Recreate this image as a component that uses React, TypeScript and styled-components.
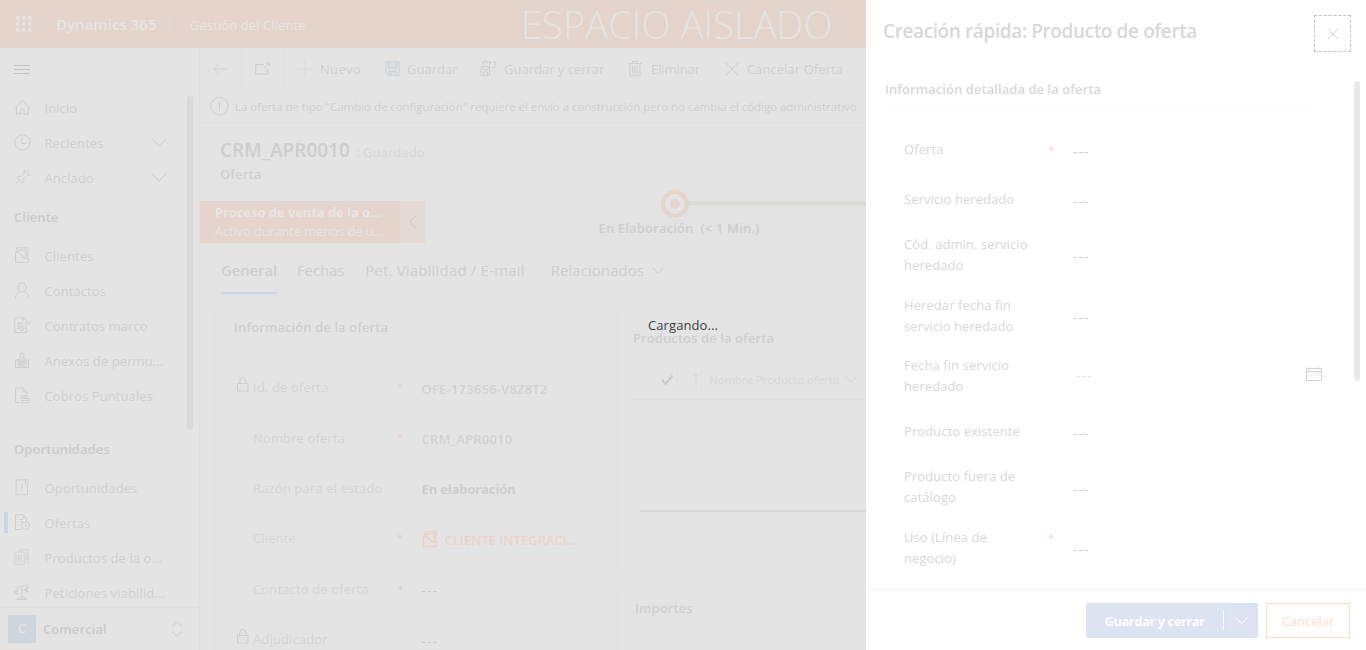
import React from 'react';
import styled, { createGlobalStyle, css } from 'styled-components';

const c = {
  page: '#e4e4e4',
  line: '#dfdfdf',
  faint: '#e1e1e1',
  text: '#cfcfcf',
  strong: '#cacaca',
  icon: '#cecece',
  brand: '#e5d4cb',
  onBrand: '#e7e6e5',
  blue: '#cbd4e5',
};

const Global = createGlobalStyle`
  * { box-sizing: border-box; }
  body { margin: 0; background: #fff; overflow: hidden; }
  #root { font-family: 'Open Sans', 'Noto Sans', sans-serif; font-size: 13px; letter-spacing: 0.09px; white-space: nowrap; color: ${c.text}; }
`;

const Shell = styled.div`
  display: grid;
  grid-template-columns: 866px 500px;
  width: 1366px;
  height: 650px;
  overflow: hidden;
`;
const Workspace = styled.div`
  display: grid;
  grid-template-rows: 48px 602px;
  background: ${c.page};
  overflow: hidden;
`;

/* Top bar */
const TopBar = styled.header`
  display: flex;
  align-items: center;
  background: ${c.brand};
  color: ${c.onBrand};
  padding-left: 16px;
`;
const Brand = styled.span`
  width: 118px;
  margin-left: 24px;
  font-size: 15px;
  font-weight: 600;
  letter-spacing: 0.03px;
`;
const Area = styled.span`
  width: 347px;
  height: 20px;
  line-height: 20px;
  padding-left: 15px;
  border-left: 1px solid #e2cfc5;
  margin-top: 2px;
`;
const Environment = styled.span`
  font-size: 38px;
  font-weight: 300;
  line-height: 46px;
  letter-spacing: 0.1px;
  color: #e6e4e3;
`;

/* Sidebar */
const Columns = styled.div`
  display: grid;
  grid-template-columns: 200px 666px;
`;
const Sidebar = styled.nav`
  display: flex;
  flex-direction: column;
  height: 602px;
  border-right: 1px solid ${c.line};
`;
const MenuToggle = styled.div`
  display: flex;
  align-items: center;
  height: 42px;
  padding-left: 14px;
  flex: none;
`;
const NavScroll = styled.div`
  display: grid;
  grid-template-columns: 181px 18px;
  height: 517px;
  overflow: hidden;
`;
const Thumb = styled.div<{ $h: number; $color: string }>`
  width: 6px;
  height: ${p => p.$h}px;
  border-radius: 3px;
  background: ${p => p.$color};
`;
const NavTrack = styled.div`
  padding: 6px 0 0 6px;
`;
const NavItem = styled.div<{ $active?: boolean }>`
  display: grid;
  grid-template-columns: 4px 26px 117px 16px;
  align-items: center;
  height: 35px;
  padding-left: 4px;
  ${p => p.$active && css`background: #e5e5e5;`}
`;
const Marker = styled.i<{ $on?: boolean }>`
  width: 4px;
  height: 21px;
  background: ${p => (p.$on ? c.blue : 'transparent')};
`;
const NavIcon = styled.span`
  display: flex;
  padding-left: 6px;
`;
const NavLabel = styled.span`
  padding-left: 10.5px;
`;
const NavHeading = styled.div<{ $gap?: number }>`
  height: 43px;
  line-height: 44px;
  margin-top: ${p => p.$gap || 0}px;
  padding-left: 14px;
  font-weight: 600;
  color: ${c.strong};
`;
const AreaSwitch = styled.div`
  display: flex;
  align-items: center;
  height: 43px;
  padding: 0 16px 0 8px;
  border-top: 1px solid ${c.line};
  font-weight: 600;
  color: ${c.strong};
  svg { margin-left: auto; }
`;
const AreaBadge = styled.span`
  width: 28px;
  height: 28px;
  margin-right: 7px;
  border-radius: 2px;
  background: #ced6dc;
  color: #e4e4e4;
  line-height: 26px;
  text-align: center;
`;

/* Main area */
const Main = styled.main`
  display: flex;
  flex-direction: column;
  height: 602px;
  overflow: hidden;
`;
const CommandBar = styled.div`
  display: flex;
  height: 42px;
  flex: none;
  border-bottom: 1px solid ${c.line};
`;
const IconCell = styled.div<{ $w: number }>`
  display: flex;
  align-items: center;
  justify-content: center;
  width: ${p => p.$w}px;
  border-right: 1px solid ${c.line};
`;
const Command = styled.div<{ $w: number; $gap: number; $ls?: number }>`
  display: flex;
  align-items: center;
  gap: ${p => p.$gap}px;
  width: ${p => p.$w}px;
  letter-spacing: ${p => p.$ls || 0}px;
`;
const Commands = styled.div`
  display: flex;
  padding-left: 12px;
`;
const Notice = styled.div`
  display: flex;
  align-items: center;
  gap: 5px;
  height: 33px;
  flex: none;
  padding-left: 9px;
  border-bottom: 1px solid ${c.line};
  font-size: 11.5px;
  letter-spacing: -0.04px;
`;
const RecordHead = styled.div`
  height: 78px;
  flex: none;
  padding: 13px 0 0 20px;
`;
const RecordTitle = styled.div`
  display: flex;
  align-items: center;
  gap: 5px;
  height: 28px;
`;
const RecordName = styled.span`
  font-size: 19px;
  font-weight: 600;
  letter-spacing: 0.04px;
  color: #cdcdcd;
`;
const SaveState = styled.span`
  padding: 3px 0 0 1px;
  color: #d6d6d6;
`;
const EntityName = styled.div`
  padding-top: 1px;
  line-height: 18px;
  font-weight: 600;
  color: #cfcfcf;
`;
const ProcessBar = styled.div`
  display: flex;
  height: 42px;
  flex: none;
  background: #e3e3e3;
  border-top: 1px solid ${c.faint};
`;
const ProcessName = styled.div`
  width: 200px;
  height: 42px;
  margin-top: -1px;
  padding: 1px 0 0 15px;
  background: ${c.brand};
  color: ${c.onBrand};
  line-height: 19px;
  letter-spacing: -0.19px;
`;
const ProcessTitle = styled.div`
  font-weight: 700;
  line-height: 20px;
  letter-spacing: -0.07px;
`;
const ProcessCollapse = styled.div`
  display: flex;
  align-items: center;
  justify-content: center;
  width: 25px;
  height: 42px;
  margin-top: -1px;
  background: #e3dad6;
`;
const Stage = styled.div`
  flex: 1;
  display: flex;
  flex-direction: column;
  padding-left: 173px;
  margin-top: -13px;
`;
const StageTrack = styled.div`
  display: flex;
  align-items: center;
  height: 30px;
  padding-left: 63px;
`;
const StageRing = styled.i`
  display: grid;
  place-items: center;
  width: 28px;
  height: 28px;
  border: 4px solid ${c.brand};
  border-radius: 50%;
  background: ${c.page};
  &::after {
    content: '';
    width: 10px;
    height: 10px;
    border-radius: 50%;
    background: ${c.brand};
  }
`;
const StageLine = styled.i`
  flex: 1;
  height: 4px;
  margin-top: -2px;
  background: #d9d9d6;
`;
const StageName = styled.span`
  padding-left: 0.5px;
  font-weight: 600;
  line-height: 18px;
  letter-spacing: 0.16px;
  white-space: pre;
  color: #cdcdcd;
`;
const Tabs = styled.div`
  display: flex;
  height: 52px;
  flex: none;
  padding-left: 21px;
  border-bottom: 1px solid ${c.line};
  font-size: 15px;
`;
const Tab = styled.span<{ $gap?: number; $ls: number; $active?: boolean }>`
  display: flex;
  align-items: center;
  gap: 8px;
  height: 51px;
  padding-top: 5px;
  margin-right: ${p => p.$gap || 0}px;
  letter-spacing: ${p => p.$ls}px;
  color: #cecece;
  border-bottom: 2px solid ${p => (p.$active ? c.blue : 'transparent')};
  font-weight: ${p => (p.$active ? 600 : 400)};
`;
const Form = styled.div`
  display: grid;
  grid-template-columns: 388px 250px;
  gap: 14px;
  flex: 1;
  padding: 13px 0 0 15px;
`;
const Stack = styled.div`
  display: flex;
  flex-direction: column;
  gap: 16px;
`;
const Card = styled.section<{ $h: number; $pad: number }>`
  height: ${p => p.$h}px;
  padding: 0 0 0 ${p => p.$pad}px;
  border: 1px solid ${c.faint};
  border-right-color: ${p => (p.$pad > 17 ? c.faint : 'transparent')};
  border-radius: 3px;
`;
const CardTitle = styled.h2<{ $h: number; $top: number }>`
  margin: 0 17px 0 0;
  height: ${p => p.$h}px;
  padding-top: ${p => p.$top}px;
  border-bottom: 1px solid ${c.faint};
  font-size: 13px;
  font-weight: 600;
  line-height: 20px;
  color: #cfcfcf;
`;
const Fields = styled.div`
  padding: 16px 0 0 3px;
`;
const Field = styled.div`
  display: grid;
  grid-template-columns: 16px 144px 24px 160px;
  height: 50.4px;
  align-items: center;
`;
const FieldLabel = styled.span`
  letter-spacing: 0.14px;
  color: #d4d4d4;
`;
const Required = styled.span<{ $color?: string }>`
  font-size: 11px;
  line-height: 14px;
  padding-bottom: 1px;
  color: ${p => p.$color || '#e8cdca'};
`;
const FieldValue = styled.span<{ $kind?: string }>`
  display: flex;
  align-items: center;
  gap: 6px;
  padding: 3px 0 0 0.5px;
  font-weight: ${p => (p.$kind === 'bold' ? 700 : p.$kind === 'empty' ? 400 : 600)};
  letter-spacing: ${p => (p.$kind === 'bold' ? -0.14 : p.$kind === 'empty' ? 1.4 : p.$kind === 'link' ? 0.02 : 0.2)}px;
  color: ${p => (p.$kind === 'link' ? '#e8d4cc' : p.$kind === 'bold' ? '#cdcdcd' : p.$kind === 'empty' ? '#cbcbcb' : '#d2d2d2')};
`;
const GridHead = styled.div`
  display: flex;
  align-items: center;
  height: 40px;
  border-bottom: 1px solid ${c.line};
  padding-left: 28px;
  font-size: 11.5px;
  letter-spacing: -0.09px;
  color: #d8d8d8;
`;
const Divider = styled.i<{ $l: number; $r: number }>`
  width: 1px;
  height: 20px;
  margin: 0 ${p => p.$r}px 0 ${p => p.$l}px;
  background: ${c.line};
`;
const HeadText = styled.span`
  margin-right: 6px;
`;
const GridBody = styled.div`
  height: 112px;
  margin-left: 7px;
  border-bottom: 2px solid #d9d9d9;
`;
const GridFoot = styled.div`
  height: 39px;
  margin-top: 7px;
  background: #e3e3e3;
`;

/* Loading message over the dimmed page */
const Loading = styled.div`
  position: absolute;
  left: 648px;
  top: 316px;
  line-height: 18px;
  color: #3c3c3c;
`;

/* Quick create panel */
const Panel = styled.aside`
  display: grid;
  grid-template-rows: 69px 520px 61px;
  background: #fff;
  color: #d8d8d8;
`;
const PanelHead = styled.header`
  display: flex;
  justify-content: space-between;
  padding: 15px 15px 0 17px;
`;
const PanelTitle = styled.h1`
  margin: 0;
  font-size: 19px;
  font-weight: 600;
  line-height: 33px;
  letter-spacing: -0.39px;
  color: #d8d8d8;
`;
const CloseButton = styled.button`
  display: grid;
  place-items: center;
  width: 37px;
  height: 37px;
  padding: 0;
  border: 1px dashed #c2c2c2;
  background: none;
`;
const PanelBody = styled.div`
  display: grid;
  grid-template-columns: 449px 39px 12px;
  overflow: hidden;
`;
const PanelForm = styled.div`
  padding-left: 17px;
`;
const PanelSection = styled.h2`
  margin: 0;
  height: 39px;
  padding: 10px 0 0 2px;
  border-bottom: 1px solid #fafafa;
  font-size: 13px;
  font-weight: 600;
  line-height: 20px;
  letter-spacing: 0.06px;
  color: #d8d8d8;
`;
const PanelTrack = styled.div`
  grid-column: 3;
  padding-top: 12px;
`;
const PanelFields = styled.div`
  display: flex;
  flex-direction: column;
  padding: 30.5px 0 0 21px;
`;
const PanelField = styled.div<{ $h: number }>`
  display: grid;
  grid-template-columns: 144px 25px 233px 20px;
  height: ${p => p.$h}px;
  line-height: 21px;
  align-items: start;
`;
const PanelLabel = styled.span`
  white-space: pre-line;
  letter-spacing: 0.08px;
`;
const PanelRequired = styled.span`
  font-size: 11px;
  color: #ffcfc8;
`;
const PanelValue = styled.span<{ $top: number; $indent?: boolean }>`
  padding: ${p => p.$top}px 0 0 ${p => (p.$indent ? 3 : 0)}px;
  letter-spacing: 1.5px;
  color: ${p => (p.$indent ? '#dcdcdc' : '#c8c8c8')};
`;
const PanelIcon = styled.span`
  padding-top: 11px;
  line-height: 0;
`;
const PanelFoot = styled.footer`
  display: flex;
  padding: 13px 16px 0 0;
  justify-content: flex-end;
  border-top: 1px solid #f5f5f5;
  margin-left: 1px;
`;
const SaveButton = styled.button`
  width: 138px;
  height: 35px;
  padding: 0 2px 0 0;
  border: 1px solid #dce4f1;
  border-right: 0;
  border-radius: 2px 0 0 2px;
  background: linear-gradient(#fff, #fff) right 0 center / 1px 19px no-repeat #dce4f1;
  color: #fdfdfe;
  font: 700 13px 'Open Sans', sans-serif;
  letter-spacing: -0.49px;
`;
const SplitButton = styled.button`
  display: grid;
  place-items: center;
  width: 34px;
  height: 35px;
  margin-right: 8px;
  padding: 0;
  border: 1px solid #cfe4f4;
  border-radius: 0 2px 2px 0;
  background: #dce4f1;
`;
const CancelButton = styled.button`
  width: 84px;
  height: 35px;
  padding: 0;
  border: 1px solid #ffdccb;
  background: #fff;
  color: #ffdccb;
  font: 400 13px 'Open Sans', sans-serif;
`;

/* Icons */
type IconProps = { d: string; w?: number; h?: number; color?: string; sw?: number; fill?: string };
const Icon = ({ d, w = 16, h = 16, color = c.icon, sw = 1, fill = 'none' }: IconProps) => (
  <svg width={w} height={h} viewBox={`0 0 ${w} ${h}`} fill={fill} stroke={color} strokeWidth={sw}>
    <path d={d} />
  </svg>
);
const chevron = 'M.5 .5l7.500 7.500 7.500-7.500';
const icons = {
  home: 'M1 9L8.500 1.500 16 9M2.500 7.500v7.500h4.500v-5h3v5h4.500V7.500',
  clock: 'M8.500 .8a7.700 7.700 0 1 0 0 15.400a7.700 7.700 0 0 0 0-15.400M8 4v5.500h4',
  pin: 'M10.500 1L15.500 6l-1.500 1-1 -.3-3.500 3.500.3 2.500-1.500 1.500L3 8.500l1.500-1.200 2.600.3L10.300 4 9.800 2zM5.600 11L1 15.500',
  account: 'M4.500 5.500H1.500v10h13v-4h-3.500L4.500 5.500M2.500 5.500V.8h11.500v10.500M4.500 5.500v-2.500h7.500v8',
  contact: 'M8 1a4.300 4.300 0 1 0 0 8.600A4.300 4.300 0 0 0 8 1M1.200 16.500c.5-4.500 3-6.900 6.800-6.900s6.300 2.400 6.800 6.900',
  contract: 'M12.500 11.500v4H.8V.8h8.700l3 3v2.200M3 6h6M3 8h5M3 10h5M3 11.500h4M6.500 13.500h3M9.500 1v3M8 12l.8-2.500L14.500 4.500l1.500 1.500L10.500 11.500z',
  annex: 'M1.500 8h2v1.500M14.500 8v7.500h-13V8M12.500 8h2M3 10h10M3 12h10M4 14h8M6 12V3a2 2 0 0 1 4 0v9M8 4v8M4.500 6.500v3M11.500 6.500v3',
  billing: 'M6 15.500H1.500V.8h7.500l4 4v3M9 .8v4h4M7.500 9h5.500v2.500H7.500zM7 13.500h8M9 11.500h6v4.200H7.500v-2.200',
  opportunity: 'M11.500 .8h2.500v5h-2.500zM11.500 .8H2v14.900h11.500V6M8 5v5M8 11v1.500',
  offer: 'M7 15.500H1.500V.8h7.500l3.500 3.500v3M9 .8v3.500h3.500M3.500 5.500h1M6 5.500h3M3.500 8h1M6 8h3M3.500 10.500h1M6 10.500h1M11.700 7.700a3.900 3.900 0 1 0 0 7.900a3.900 3.900 0 0 0 0-7.900M11.500 9.500v2.500h2',
  products: 'M5.500 3V.8h9v13h-4M.8 3h9.500v12.700H.8zM3 5.500v7M4.500 5.500v7M6 5.500v7M7.500 5.500v7M13.500 3L11 5.500l2.500 2.500v2h-2M12 4v8',
  balance: 'M1.500 3.500L15 .8M8 2.500v11M3 15.500h10M3.500 15c0-1.500 9-1.500 9 0M5 6a2.300 2.300 0 1 0 0 4M.5 7.500h3.500M.5 9h3M15 3.500a2.300 2.300 0 1 0 0 4M10.500 5h3.500M10.500 6.500h3',
};

type NavEntry = [string, keyof typeof icons];
const NavEntryRow = ({ item, active, expand }: { item: NavEntry; active?: boolean; expand?: boolean }) => (
  <NavItem $active={active}>
    <Marker $on={active} />
    <NavIcon><Icon d={icons[item[1]]} w={17} h={17} color={item[1] === 'products' ? '#d6d6d6' : c.icon} /></NavIcon>
    <NavLabel>{item[0]}</NavLabel>
    {expand && <Icon d={chevron} w={16} h={9} />}
  </NavItem>
);

const clientItems: NavEntry[] = [
  ['Clientes', 'account'], ['Contactos', 'contact'], ['Contratos marco', 'contract'],
  ['Anexos de permu...', 'annex'], ['Cobros Puntuales', 'billing'],
];
const opportunityItems: NavEntry[] = [
  ['Oportunidades', 'opportunity'], ['Ofertas', 'offer'],
  ['Productos de la o...', 'products'], ['Peticiones viabilid...', 'balance'],
];

const LockIcon = () => <Icon w={12} h={16} d="M.5 6.500h10.500v7.500H.5zM2.800 6.500V3.500a3 3 0 0 1 6 0v3" />;

const offerFields = [
  { label: 'Id. de oferta', lock: true, mark: '*', value: 'OFE-173656-V8Z8T2' },
  { label: 'Nombre oferta', mark: '*', value: 'CRM_APR0010' },
  { label: 'Razón para el estado', value: 'En elaboración', kind: 'bold' },
  { label: 'Cliente', mark: '*', value: 'CLIENTE INTEGRACI...', kind: 'link' },
  { label: 'Contacto de oferta', mark: '+', value: '---', kind: 'empty' },
  { label: 'Adjudicador', lock: true, value: '---', kind: 'empty' },
];

const panelFields = [
  { label: 'Oferta', h: 50, top: 2, required: true },
  { label: 'Servicio heredado', h: 45, top: 2 },
  { label: 'Cód. admin. servicio\nheredado', h: 61, top: 12 },
  { label: 'Heredar fecha fin\nservicio heredado', h: 60, top: 12 },
  { label: 'Fecha fin servicio\nheredado', h: 66, top: 10, date: true },
  { label: 'Producto existente', h: 45, top: 2 },
  { label: 'Producto fuera de\ncatálogo', h: 61, top: 13 },
  { label: 'Uso (Línea de\nnegocio)', h: 50, top: 12, required: true },
];

const SaveIcon = () => (
  <svg width="15" height="16" viewBox="0 0 15 16" fill="none" stroke={c.icon}>
    <path d="M1 1h13v13.500H3L1 12.500z" stroke="#c9cdd0" />
    <path d="M3.500 1v6h8V1M4 14.500V10h7v4.500M6.500 14.500V12" fill="#d9e0e5" />
  </svg>
);

export default function App() {
  return (
    <Shell>
      <Global />
      <Workspace>
        <TopBar>
          <svg width="16" height="16" fill={c.onBrand}>
            {[0, 6, 12].map(y => [0, 6, 12].map(x => <rect key={`${x}-${y}`} x={x} y={y} width="3.400" height="3.400" rx="1" />))}
          </svg>
          <Brand>Dynamics 365</Brand>
          <Area>Gestión del Cliente</Area>
          <Environment>ESPACIO AISLADO</Environment>
        </TopBar>
        <Columns>
          <Sidebar>
            <MenuToggle><Icon d="M0 1.500h16M0 5.500h16M0 9.500h16" h={11} color="#c3c3c3" /></MenuToggle>
            <NavScroll>
              <div>
                <NavEntryRow item={['Inicio', 'home']} />
                <NavEntryRow item={['Recientes', 'clock']} expand />
                <NavEntryRow item={['Anclado', 'pin']} expand />
                <NavHeading>Cliente</NavHeading>
                {clientItems.map(i => <NavEntryRow key={i[0]} item={i} />)}
                <NavHeading $gap={14}>Oportunidades</NavHeading>
                {opportunityItems.map(i => <NavEntryRow key={i[0]} item={i} active={i[0] === 'Ofertas'} />)}
              </div>
              <NavTrack><Thumb $h={333} $color="#d9d9d9" /></NavTrack>
            </NavScroll>
            <AreaSwitch>
              <AreaBadge>C</AreaBadge>
              Comercial
              <Icon d="M1 5.500L6 .7l5 4.800M1 10.500l5 4.800 5-4.800" w={12} h={16} />
            </AreaSwitch>
          </Sidebar>
          <Main>
            <CommandBar>
              <IconCell $w={42}><Icon d="M14 7H.8M6.500 1L.8 7l5.700 6" w={15} h={14} color="#d0d3d1" /></IconCell>
              <IconCell $w={43}><Icon d="M8.500 2.500H.8v9.500h12V7M9 6.500L14.500 1M11 1h3.700v3.700" w={16} h={14} color="#cbcbcb" /></IconCell>
              <Commands>
                <Command $w={88} $gap={7} $ls={0.33}><Icon d="M8 0v16M0 8h16" color="#d3dad7" /> Nuevo</Command>
                <Command $w={95} $gap={7}><SaveIcon /> Guardar</Command>
                <Command $w={148} $gap={8}>
                  <Icon d="M1 6.500h8.500v9H1zM3 6.500v3h5v-3M3.500 15.500v-3.500h4v3.500M3.500 4.500v-3.500h4M6 2.500h5M9.500 .8l2 1.700-2 1.700M13 1.500h2v6h-3" w={16} h={17} /> Guardar y cerrar
                </Command>
                <Command $w={96} $gap={9} $ls={-0.08}>
                  <Icon d="M.5 3.500h13M4.500 3.500v-2h5v2M2 3.500v12.300h10V3.500M4.800 6v7.500M7 6v7.500M9.200 6v7.500" w={14} h={17} /> Eliminar
                </Command>
                <Command $w={120} $gap={7} $ls={0.06}><Icon d="M1 1l14 14M15 1L1 15" /> Cancelar Oferta</Command>
              </Commands>
            </CommandBar>
            <Notice>
              <Icon d="M10.500 1.500a8.700 8.700 0 1 0 0 17.400a8.700 8.700 0 0 0 0-17.400M10.500 6v6M10.500 13v1.400" w={21} h={21} />
              La oferta de tipo "Cambio de configuración" requiere el envío a construcción pero no cambia el código administrativo
            </Notice>
            <RecordHead>
              <RecordTitle>
                <RecordName>CRM_APR0010</RecordName>
                <SaveState>: Guardado</SaveState>
              </RecordTitle>
              <EntityName>Oferta</EntityName>
            </RecordHead>
            <ProcessBar>
              <ProcessName>
                <ProcessTitle>Proceso de venta de la o...</ProcessTitle>
                Activo durante menos de u...
              </ProcessName>
              <ProcessCollapse><Icon d="M7 .5L.8 7 7 13.500" w={8} h={14} color="#c9c6c4" /></ProcessCollapse>
              <Stage>
                <StageTrack><StageRing /><StageLine /></StageTrack>
                <StageName>{'En Elaboración  (< 1 Min.)'}</StageName>
              </Stage>
            </ProcessBar>
            <Tabs>
              <Tab $active $gap={20} $ls={-0.15}>General</Tab>
              <Tab $gap={21} $ls={-0.15}>Fechas</Tab>
              <Tab $gap={26} $ls={0.18}>Pet. Viabilidad / E-mail</Tab>
              <Tab $ls={0.06}>Relacionados <Icon d="M.5 .5L6 6 11.500 .5" w={12} h={7} /></Tab>
            </Tabs>
            <Form>
              <Card $h={360} $pad={18}>
                <CardTitle $h={37} $top={8}>Información de la oferta</CardTitle>
                <Fields>
                  {offerFields.map(f => (
                    <Field key={f.label}>
                      <span>{f.lock && <LockIcon />}</span>
                      <FieldLabel>{f.label}</FieldLabel>
                      <Required $color={f.mark === '+' ? '#c9c9e6' : undefined}>{f.mark}</Required>
                      <FieldValue $kind={f.kind}>
                        {f.kind === 'link' && <Icon d={icons.account} w={17} h={17} color="#e8d1c8" sw={1.500} />}
                        {f.value}
                      </FieldValue>
                    </Field>
                  ))}
                </Fields>
              </Card>
              <Stack>
                <Card $h={267} $pad={15}>
                  <CardTitle $h={51} $top={19}>Productos de la oferta</CardTitle>
                  <GridHead>
                    <Icon d="M1 6l3.500 4L11.500 1.500" w={13} h={12} sw={2} color="#cbcbcb" />
                    <Divider $l={3} $r={15} />
                    <Icon d="M3 13V1M.5 3.500L3 1l2.500 2.500" w={6} h={13} color="#d8d8d8" />
                    <Divider $l={2} $r={7} />
                    <HeadText>Nombre Producto oferta</HeadText>
                    <Icon d="M.5 .5L6 6 11.500 .5" w={12} h={7} color="#d6d6d6" />
                  </GridHead>
                  <GridBody />
                  <GridFoot />
                </Card>
                <Card $h={80} $pad={17}>
                  <CardTitle $h={36} $top={6}>Importes</CardTitle>
                </Card>
              </Stack>
            </Form>
          </Main>
        </Columns>
      </Workspace>
      <Panel>
        <PanelHead>
          <PanelTitle>Creación rápida: Producto de oferta</PanelTitle>
          <CloseButton aria-label="Cerrar"><Icon d="M1 1l10 10M11 1L1 11" w={12} h={12} color="#d6d6d6" /></CloseButton>
        </PanelHead>
        <PanelBody>
          <PanelForm>
            <PanelSection>Información detallada de la oferta</PanelSection>
            <PanelFields>
              {panelFields.map(f => (
                <PanelField key={f.label} $h={f.h}>
                  <PanelLabel>{f.label}</PanelLabel>
                  <PanelRequired>{f.required && '*'}</PanelRequired>
                  <PanelValue $top={f.top} $indent={f.date}>---</PanelValue>
                  {f.date && (
                    <PanelIcon>
                      <Icon d="M.5 2.500h15v12H.5zM.5 5.500h15M3.500 1v3M12.500 1v3M5.500 7.500h1M8.500 7.500h1M11.500 7.500h1M2.500 9.500h1M5.500 9.500h1M8.500 9.500h1M11.500 9.500h1M2.500 11.500h1M5.500 11.500h1M8.500 11.500h1M11.500 11.500h1" color="#d6d0d4" />
                    </PanelIcon>
                  )}
                </PanelField>
              ))}
            </PanelFields>
          </PanelForm>
          <PanelTrack><Thumb $h={300} $color="#e9e9e9" /></PanelTrack>
        </PanelBody>
        <PanelFoot>
          <SaveButton>Guardar y cerrar</SaveButton>
          <SplitButton aria-label="Más opciones"><Icon d="M.5 .5L6.500 6.500 12.500 .5" w={13} h={8} color="#fff" /></SplitButton>
          <CancelButton>Cancelar</CancelButton>
        </PanelFoot>
      </Panel>
      <Loading>Cargando...</Loading>
    </Shell>
  );
}
